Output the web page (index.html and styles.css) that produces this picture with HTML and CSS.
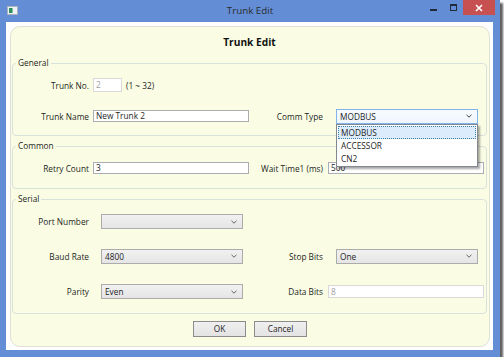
FILE: index.html
```html
<!DOCTYPE html>
<html>
<head>
<meta charset="utf-8">
<link rel="stylesheet" href="styles.css">
</head>
<body>
<div class="window">
  <div class="titlebar">
    <div class="tb-left">
      <svg class="appicon" width="11" height="9" viewBox="0 0 11 9">
        <rect x="0.5" y="0.5" width="10" height="8" fill="#eef2f6" stroke="#a9b4c0"/>
        <rect x="2" y="2" width="3" height="5" fill="#2f8f5f"/>
        <rect x="5" y="2" width="1" height="5" fill="#7fbfa0"/>
      </svg>
    </div>
    <div class="title">Trunk Edit</div>
    <div class="controls">
      <span class="ctl-min"></span>
      <span class="ctl-max"></span>
      <span class="ctl-close">
        <svg width="8" height="8" viewBox="0 0 8 8"><path d="M1 1 L7 7 M7 1 L1 7" stroke="#fff" stroke-width="1.6"/></svg>
      </span>
    </div>
  </div>
  <div class="client">
    <div class="panel">
      <div class="heading">Trunk Edit</div>

      <fieldset class="group">
        <legend>General</legend>
        <div class="grid general-rows">
          <div class="lbl">Trunk No.</div>
          <div class="cell">
            <span class="tb tb-disabled tb-small">2</span>
            <span class="hint">(1 ~ 32)</span>
          </div>
          <div></div>
          <div></div>

          <div class="lbl">Trunk Name</div>
          <div class="cell"><span class="tb tb-full">New Trunk 2</span></div>
          <div class="lbl lbl-right">Comm Type</div>
          <div class="cell">
            <div class="combo combo-open">
              <span class="combo-text">MODBUS</span>
              <svg class="chev" width="6" height="4" viewBox="0 0 6 4"><path d="M0.5 0.8 L3 3.2 L5.5 0.8" fill="none" stroke="#444" stroke-width="1"/></svg>
              <div class="dropdown">
                <div class="item item-sel">MODBUS</div>
                <div class="item">ACCESSOR</div>
                <div class="item">CN2</div>
              </div>
            </div>
          </div>
        </div>
      </fieldset>

      <fieldset class="group">
        <legend>Common</legend>
        <div class="grid common-rows">
          <div class="lbl">Retry Count</div>
          <div class="cell"><span class="tb tb-full">3</span></div>
          <div class="lbl lbl-right">Wait Time1 (ms)</div>
          <div class="cell"><span class="tb tb-full">500</span></div>
        </div>
      </fieldset>

      <fieldset class="group">
        <legend>Serial</legend>
        <div class="grid serial-rows">
          <div class="lbl">Port Number</div>
          <div class="cell">
            <div class="combo">
              <span class="combo-text"></span>
              <svg class="chev" width="6" height="4" viewBox="0 0 6 4"><path d="M0.5 0.8 L3 3.2 L5.5 0.8" fill="none" stroke="#666" stroke-width="1"/></svg>
            </div>
          </div>
          <div></div>
          <div></div>

          <div class="lbl">Baud Rate</div>
          <div class="cell">
            <div class="combo">
              <span class="combo-text">4800</span>
              <svg class="chev" width="6" height="4" viewBox="0 0 6 4"><path d="M0.5 0.8 L3 3.2 L5.5 0.8" fill="none" stroke="#666" stroke-width="1"/></svg>
            </div>
          </div>
          <div class="lbl lbl-right">Stop Bits</div>
          <div class="cell">
            <div class="combo">
              <span class="combo-text">One</span>
              <svg class="chev" width="6" height="4" viewBox="0 0 6 4"><path d="M0.5 0.8 L3 3.2 L5.5 0.8" fill="none" stroke="#666" stroke-width="1"/></svg>
            </div>
          </div>

          <div class="lbl">Parity</div>
          <div class="cell">
            <div class="combo">
              <span class="combo-text">Even</span>
              <svg class="chev" width="6" height="4" viewBox="0 0 6 4"><path d="M0.5 0.8 L3 3.2 L5.5 0.8" fill="none" stroke="#666" stroke-width="1"/></svg>
            </div>
          </div>
          <div class="lbl lbl-right">Data Bits</div>
          <div class="cell"><span class="tb tb-full tb-disabled tb-tall">8</span></div>
        </div>
      </fieldset>

      <div class="buttons">
        <span class="btn">OK</span>
        <span class="btn">Cancel</span>
      </div>
    </div>
  </div>
</div>
</body>
</html>
```

FILE: styles.css
```css
html, body {
  margin: 0;
  padding: 0;
  background: #ffffff;
}

body {
  font-family: "Open Sans", "Noto Sans", sans-serif;
  font-size: 8.3px;
  color: #1e1e1e;
}

.window {
  width: 500px;
  height: 357px;
  background: #638ed6;
  box-shadow: 3px 3px 2px rgba(40, 40, 40, 0.75);
  display: flex;
  flex-direction: column;
}

/* ---------- title bar ---------- */
.titlebar {
  height: 22px;
  display: grid;
  grid-template-columns: 1fr auto 1fr;
  align-items: center;
}

.tb-left {
  padding-left: 7px;
  display: flex;
  align-items: center;
}

.appicon {
  display: block;
  margin-top: -1px;
}

.title {
  font-size: 9.8px;
  color: #2b2b2b;
  line-height: 22px;
}

.controls {
  justify-self: end;
  align-self: start;
  display: flex;
  align-items: flex-start;
  padding-right: 5px;
}

.ctl-min {
  width: 7px;
  height: 2px;
  background: #1f2a3a;
  margin-top: 9px;
  margin-right: 13px;
}

.ctl-max {
  width: 5px;
  height: 4px;
  border: 1px solid #1f2a3a;
  border-top-width: 2px;
  margin-top: 4px;
  margin-right: 6px;
}

.ctl-close {
  width: 32px;
  height: 15px;
  background: #c75050;
  display: flex;
  align-items: center;
  justify-content: center;
}

.ctl-close svg {
  display: block;
}

/* ---------- client area ---------- */
.client {
  flex: 1;
  margin: 0 7px 7px 6px;
  background: #ffffff;
  padding: 4px 3px 3px 4px;
  display: flex;
}

.panel {
  flex: 1;
  background: #fafde4;
  border: 1px solid #dedfd6;
  border-radius: 10px;
  padding: 0 2px 0 1px;
  display: flex;
  flex-direction: column;
}

.heading {
  height: 30px;
  line-height: 30px;
  text-align: center;
  font-weight: bold;
  font-size: 10.2px;
  color: #111;
}

/* ---------- group boxes ---------- */
.group {
  margin: 0;
  padding: 0 0 4px 0;
  border: 1px solid #d9e1dd;
  border-radius: 4px;
  min-width: 0;
}

.group + .group {
  margin-top: 4px;
}

.group legend {
  padding: 0 2px;
  margin-left: 3px;
  line-height: 12px;
  height: 12px;
  color: #1e1e1e;
}

.grid {
  display: grid;
  grid-template-columns: 80px 156px 79px 156px;
  align-items: center;
}

.general-rows {
  grid-template-rows: 32px 30px;
}

.common-rows {
  grid-template-rows: 32px;
}

.serial-rows {
  grid-template-rows: 33px 36px 35px;
}

.lbl {
  text-align: right;
  padding-right: 4px;
  white-space: nowrap;
}

.lbl-right {
  padding-right: 5px;
}

.cell {
  display: flex;
  align-items: center;
  min-width: 0;
}

/* ---------- text boxes ---------- */
.tb {
  display: block;
  box-sizing: border-box;
  height: 12px;
  line-height: 10px;
  border: 1px solid #abadb3;
  background: #ffffff;
  padding-left: 2px;
  white-space: nowrap;
  overflow: hidden;
}

.tb-full {
  width: 156px;
}

.tb-small {
  width: 29px;
  height: 14px;
  line-height: 12px;
}

.tb-tall {
  height: 13px;
  line-height: 11px;
}

.tb-disabled {
  border-color: #d9d9d9;
  color: #a0a0a0;
  background: #ffffff;
}

.hint {
  margin-left: 4px;
}

/* ---------- combo boxes ---------- */
.combo {
  position: relative;
  box-sizing: border-box;
  width: 142px;
  height: 15px;
  margin-left: 8px;
  border: 1px solid #acacac;
  background: linear-gradient(#f1f1f1, #e5e5e5);
  display: flex;
  align-items: center;
  justify-content: space-between;
  padding: 0 5px 0 3px;
}

.combo-text {
  line-height: 13px;
}

.chev {
  display: block;
}

.combo-open {
  border-color: #7eb4ea;
  background: linear-gradient(#f7fbfe, #eef6fd);
}

.dropdown {
  position: absolute;
  top: 14px;
  left: -1px;
  width: 142px;
  box-sizing: border-box;
  height: 43px;
  background: #ffffff;
  border: 1px solid #828790;
  box-shadow: 2px 2px 2px rgba(0, 0, 0, 0.35);
  padding: 1px;
  z-index: 5;
}

.item {
  height: 13px;
  line-height: 13px;
  padding-left: 3px;
  box-sizing: border-box;
}

.item-sel {
  background: #dcecfc;
  border: 1px dotted #3c7fb1;
  line-height: 11px;
  padding-left: 2px;
}

/* ---------- buttons ---------- */
.buttons {
  margin-top: 7px;
  display: flex;
  justify-content: center;
  gap: 8px;
  padding-left: 1px;
}

.btn {
  box-sizing: border-box;
  width: 53px;
  height: 16px;
  line-height: 14px;
  text-align: center;
  border: 1px solid #8c8c8c;
  background: linear-gradient(#f0f0f0, #e3e3e3);
}
```
